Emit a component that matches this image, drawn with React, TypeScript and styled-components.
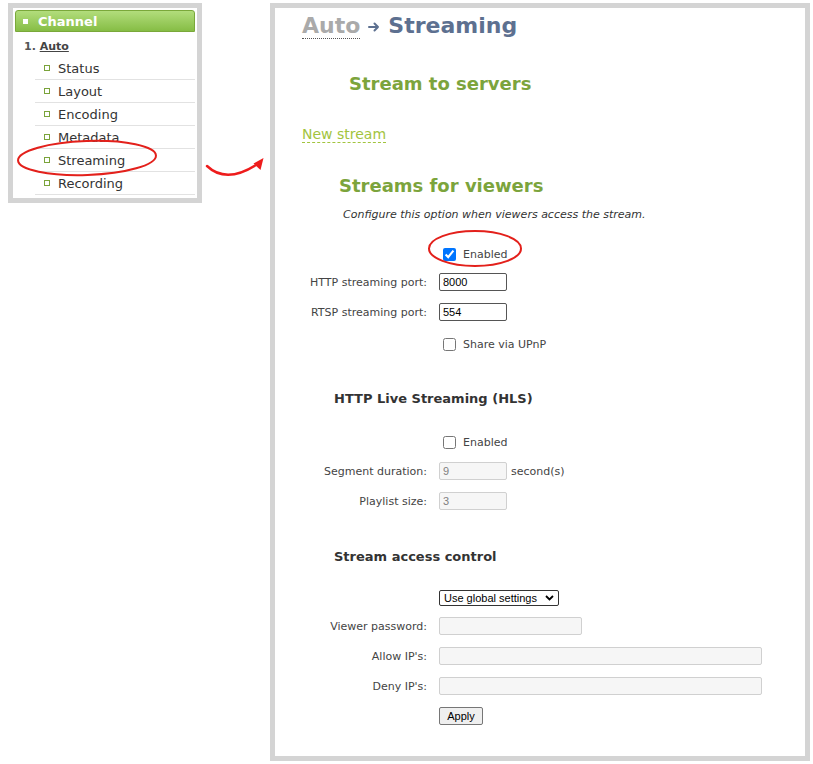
import React from "react";
import styled, { createGlobalStyle } from "styled-components";

const GlobalStyle = createGlobalStyle`
  body {
    margin: 0;
    background: #ffffff;
    font-family: "DejaVu Sans", Verdana, sans-serif;
  }
`;

const Page = styled.div`
  display: flex;
  align-items: flex-start;
  padding: 3px 0 0 8px;
`;

/* ---------- left navigation ---------- */

const NavPanel = styled.nav`
  position: relative;
  width: 194px;
  box-sizing: border-box;
  border: 5px solid #d4d4d4;
  padding: 2px 2px 3px;
`;

const ChannelHeader = styled.div`
  display: flex;
  align-items: center;
  height: 22px;
  box-sizing: border-box;
  padding-left: 7px;
  border: 1px solid #7aa83a;
  border-radius: 3px 3px 0 0;
  background: linear-gradient(#b2dd7c, #86bd45);
  color: #ffffff;
  font-size: 13px;
  font-weight: bold;
`;

const HeaderBullet = styled.span`
  width: 5px;
  height: 5px;
  margin-right: 10px;
  background: #ffffff;
`;

const TabTitle = styled.div`
  padding: 8px 0 4px 9px;
  font-size: 11px;
  line-height: 13px;
  font-weight: bold;
  color: #555555;

  u {
    color: #444444;
  }
`;

const MenuList = styled.ul`
  list-style: none;
  margin: 0 0 0 20px;
  padding: 0;
`;

const MenuItem = styled.li`
  display: flex;
  align-items: center;
  height: 23px;
  box-sizing: border-box;
  padding-left: 9px;
  border-bottom: 1px solid #e2e2e2;
  font-size: 13px;
  color: #333333;
`;

const Bullet = styled.span`
  width: 6px;
  height: 6px;
  box-sizing: border-box;
  margin-right: 8px;
  border: 1px solid #7aa33a;
`;

const Circle = styled.svg`
  position: absolute;
  overflow: visible;
  pointer-events: none;
`;

const ArrowColumn = styled.div`
  width: 68px;
  padding-top: 148px;

  svg {
    display: block;
  }
`;

/* ---------- right content ---------- */

const ContentPanel = styled.main`
  position: relative;
  width: 540px;
  height: 758px;
  box-sizing: border-box;
  border: 5px solid #d4d4d4;
  padding: 5px 0 0 27px;
`;

const PageTitle = styled.h1`
  display: flex;
  align-items: baseline;
  height: 28px;
  margin: 0;
  font-size: 22px;
  line-height: 26px;
  font-weight: bold;
  color: #5d7090;
`;

const Crumb = styled.span`
  color: #aaaaaa;
  border-bottom: 1px dotted #555555;
  height: 25px;
`;

const TitleArrow = styled.svg`
  margin: 0 8px 0 8px;
  align-self: center;
`;

const SectionTitle = styled.h2<{ $indent: number; $mt: number }>`
  margin: ${(p) => p.$mt}px 0 0 ${(p) => p.$indent}px;
  font-size: 18px;
  line-height: 22px;
  font-weight: bold;
  color: #7ca43c;
`;

const SubTitle = styled.h3<{ $mt: number }>`
  margin: ${(p) => p.$mt}px 0 0 32px;
  font-size: 13px;
  line-height: 18px;
  font-weight: bold;
  color: #333333;
`;

const NewStream = styled.a`
  display: inline-block;
  margin-top: 31px;
  font-size: 14px;
  line-height: 16px;
  color: #a2c43e;
  text-decoration: none;
  border-bottom: 1px dashed #a2c43e;
`;

const Hint = styled.p`
  margin: 11px 0 0 41px;
  font-size: 11px;
  line-height: 14px;
  font-style: italic;
  color: #333333;
`;

const Row = styled.div<{ $mt: number }>`
  display: flex;
  align-items: center;
  height: 18px;
  margin-top: ${(p) => p.$mt}px;
  font-size: 11px;
  color: #444444;
`;

const FieldLabel = styled.label`
  width: 125px;
  margin-right: 12px;
  text-align: right;
  white-space: nowrap;
`;

const Spacer = styled.span`
  width: 137px;
  flex: none;
`;

const CheckLabel = styled.label`
  display: flex;
  align-items: center;
  gap: 4px;
  margin-top: 2px;

  input {
    margin: 0 3px 0 4px;
    width: 13px;
    height: 13px;
  }
`;

const controlFont = `11px "Liberation Sans", Arial, sans-serif`;

const TextInput = styled.input<{ $w: number }>`
  width: ${(p) => p.$w}px;
  height: 18px;
  box-sizing: border-box;
  padding: 0 3px;
  border: 1px solid #555555;
  border-radius: 2px;
  background: #ffffff;
  font: ${controlFont};
  color: #000000;

  &:disabled {
    border-color: #d0d0d0;
    background: #f6f6f6;
    color: #808080;
  }
`;

const Unit = styled.span`
  margin-left: 4px;
`;

const SelectWrap = styled.span`
  position: relative;
  display: inline-flex;
  margin-top: 1px;

  svg {
    position: absolute;
    right: 5px;
    top: 5px;
    pointer-events: none;
  }
`;

const Select = styled.select`
  appearance: none;
  width: 120px;
  height: 16px;
  box-sizing: border-box;
  padding: 0 0 0 4px;
  border: 1px solid #333333;
  border-radius: 2px;
  background: #ffffff;
  font: ${controlFont};
  color: #000000;
`;

const Button = styled.button`
  width: 44px;
  height: 18px;
  padding: 0;
  border: 1px solid #767676;
  border-radius: 2px;
  background: #efefef;
  font: ${controlFont};
  color: #000000;
`;

const menu = ["Status", "Layout", "Encoding", "Metadata", "Streaming", "Recording"];

export default function App() {
  return (
    <Page>
      <GlobalStyle />
      <NavPanel>
        <ChannelHeader>
          <HeaderBullet />
          Channel
        </ChannelHeader>
        <TabTitle>
          1. <u>Auto</u>
        </TabTitle>
        <MenuList>
          {menu.map((m) => (
            <MenuItem key={m}>
              <Bullet />
              {m}
            </MenuItem>
          ))}
        </MenuList>
        <Circle style={{ left: 4, top: 132 }} width="140" height="36" viewBox="0 0 140 36">
          <ellipse cx="70" cy="18" rx="69" ry="17" fill="none" stroke="#e3201b" strokeWidth="2" transform="rotate(-2 70 18)" />
        </Circle>
      </NavPanel>

      <ArrowColumn>
        <svg width="68" height="30" viewBox="0 0 68 30">
          <path d="M5 15 Q 24 33 54 14" fill="none" stroke="#ee1c1c" strokeWidth="2.5" strokeLinecap="round" />
          <polygon points="61.5,7 51.5,12.5 58.5,19" fill="#ee1c1c" />
        </svg>
      </ArrowColumn>

      <ContentPanel>
        <PageTitle>
          <Crumb>Auto</Crumb>
          <TitleArrow width="12" height="10" viewBox="0 0 12 10">
            <path d="M1 5 H10 M6.5 1.5 L10 5 L6.5 8.5" fill="none" stroke="#5d7090" strokeWidth="2" strokeLinecap="round" strokeLinejoin="round" />
          </TitleArrow>
          Streaming
        </PageTitle>

        <SectionTitle $indent={47} $mt={32}>
          Stream to servers
        </SectionTitle>

        <NewStream>New stream</NewStream>

        <SectionTitle $indent={37} $mt={32}>
          Streams for viewers
        </SectionTitle>
        <Hint>Configure this option when viewers access the stream.</Hint>

        <Row $mt={22}>
          <Spacer />
          <CheckLabel>
            <input type="checkbox" defaultChecked /> Enabled
          </CheckLabel>
        </Row>
        <Row $mt={11}>
          <FieldLabel>HTTP streaming port:</FieldLabel>
          <TextInput $w={68} defaultValue="8000" />
        </Row>
        <Row $mt={12}>
          <FieldLabel>RTSP streaming port:</FieldLabel>
          <TextInput $w={68} defaultValue="554" />
        </Row>
        <Row $mt={13}>
          <Spacer />
          <CheckLabel>
            <input type="checkbox" /> Share via UPnP
          </CheckLabel>
        </Row>

        <SubTitle $mt={38}>HTTP Live Streaming (HLS)</SubTitle>
        <Row $mt={24}>
          <Spacer />
          <CheckLabel>
            <input type="checkbox" /> Enabled
          </CheckLabel>
        </Row>
        <Row $mt={12}>
          <FieldLabel>Segment duration:</FieldLabel>
          <TextInput $w={68} defaultValue="9" disabled />
          <Unit>second(s)</Unit>
        </Row>
        <Row $mt={12}>
          <FieldLabel>Playlist size:</FieldLabel>
          <TextInput $w={68} defaultValue="3" disabled />
        </Row>

        <SubTitle $mt={38}>Stream access control</SubTitle>
        <Row $mt={22}>
          <Spacer />
          <SelectWrap>
            <Select defaultValue="global">
              <option value="global">Use global settings</option>
            </Select>
            <svg width="9" height="6" viewBox="0 0 9 6">
              <path d="M1 1 L4.5 4.5 L8 1" fill="none" stroke="#000" strokeWidth="1.8" />
            </svg>
          </SelectWrap>
        </Row>
        <Row $mt={11}>
          <FieldLabel>Viewer password:</FieldLabel>
          <TextInput $w={143} disabled />
        </Row>
        <Row $mt={12}>
          <FieldLabel>Allow IP's:</FieldLabel>
          <TextInput $w={323} disabled />
        </Row>
        <Row $mt={12}>
          <FieldLabel>Deny IP's:</FieldLabel>
          <TextInput $w={323} disabled />
        </Row>
        <Row $mt={12}>
          <Spacer />
          <Button>Apply</Button>
        </Row>

        <Circle style={{ left: 153, top: 222 }} width="94" height="37" viewBox="0 0 94 37">
          <ellipse cx="47" cy="18.5" rx="46" ry="17.5" fill="none" stroke="#e3201b" strokeWidth="2" />
        </Circle>
      </ContentPanel>
    </Page>
  );
}
